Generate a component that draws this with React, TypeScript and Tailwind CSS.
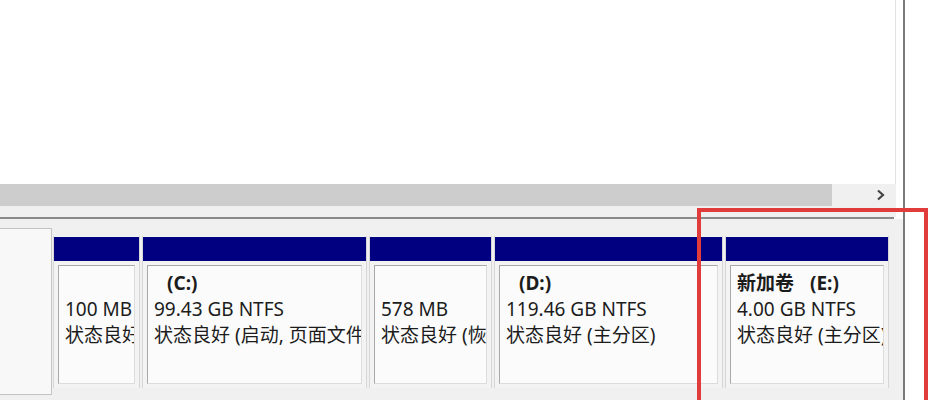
import React from "react";

type Part = { w: number; label?: string; drive?: string; size: string; status: string };

const parts: Part[] = [
    { w: 87, size: "100 MB", status: "状态良好 (EFI 系统分区)" },
    { w: 225, drive: "(C:)", size: "99.43 GB NTFS", status: "状态良好 (启动, 页面文件, 故障转储, 主分区)" },
    { w: 123, size: "578 MB", status: "状态良好 (恢复分区)" },
    { w: 229, drive: "(D:)", size: "119.46 GB NTFS", status: "状态良好 (主分区)" },
    { w: 164, label: "新加卷", drive: "(E:)", size: "4.00 GB NTFS", status: "状态良好 (主分区)" },
];

function PartitionCell({ part }: { part: Part }) {
    return (
        <div
            className="flex h-full shrink-0 flex-col border-x border-[#d6d6d6] bg-[#f3f3f3] pt-[1px]"
            style={{ width: part.w }}
        >
            <div className="h-[24px] bg-[#000080]" />
            <div className="flex-1 px-[4px] pt-[4px] pb-[4px]">
                <div className="h-full overflow-hidden border border-t-[#a8a8a8] border-l-[#a8a8a8] border-r-[#dcdcdc] border-b-[#dcdcdc] bg-[#fbfbfb] px-[6px] pt-[4px] text-[19px] leading-[26px] text-[#1c1c1c]">
                    <div className="flex h-[26px] whitespace-nowrap font-bold">
                        {part.label && <span>{part.label}</span>}
                        {part.drive && <span className={part.label ? "ml-[16px]" : "ml-[13px]"}>{part.drive}</span>}
                    </div>
                    <div className="whitespace-nowrap">{part.size}</div>
                    <div className="whitespace-nowrap">{part.status}</div>
                </div>
            </div>
        </div>
    );
}

export default function App() {
    return (
        <div
            className="relative flex h-[400px] w-[930px] overflow-hidden bg-white"
            style={{ fontFamily: '"Noto Sans", "Noto Sans CJK SC", sans-serif' }}
        >
            <div className="flex w-[903px] shrink-0 flex-col">
                <div className="h-[184px] w-[896px] border-r border-[#e2e2e2] bg-white" />
                <div className="flex h-[22px] w-[896px] bg-[#f0f0f0]">
                    <div className="w-[832px] bg-[#cdcdcd]" />
                    <div className="flex flex-1 items-center justify-end pr-[10px]">
                        <svg width="10" height="12" viewBox="0 0 10 12">
                            <polyline points="2,1.5 7,6 2,10.5" fill="none" stroke="#444" strokeWidth="2.2" />
                        </svg>
                    </div>
                </div>
                <div className="h-[11px] w-[896px] bg-[#f0f0f0]" />
                <div className="h-[2px] w-[894px] bg-[#8a8a8a]" />
                <div className="flex flex-1 flex-col bg-[#f0f0f0] pt-[9px]">
                    <div className="flex h-[167px]">
                        <div className="w-[52px] shrink-0 border-t border-r border-b border-[#c4c4c4] bg-[#f8f8f8]" />
                        <div className="flex h-[160px] gap-[2px] pt-[8px] pl-[1px]">
                            {parts.map((p, i) => (
                                <PartitionCell key={i} part={p} />
                            ))}
                        </div>
                    </div>
                </div>
            </div>
            <div className="w-[2px] shrink-0 bg-[#7a7a7a]" />
            <div className="flex-1 bg-white" />

            <div className="absolute top-[208px] left-[697px] h-[220px] w-[231px] border-[4px] border-[#e23b3b]" />
        </div>
    );
}
